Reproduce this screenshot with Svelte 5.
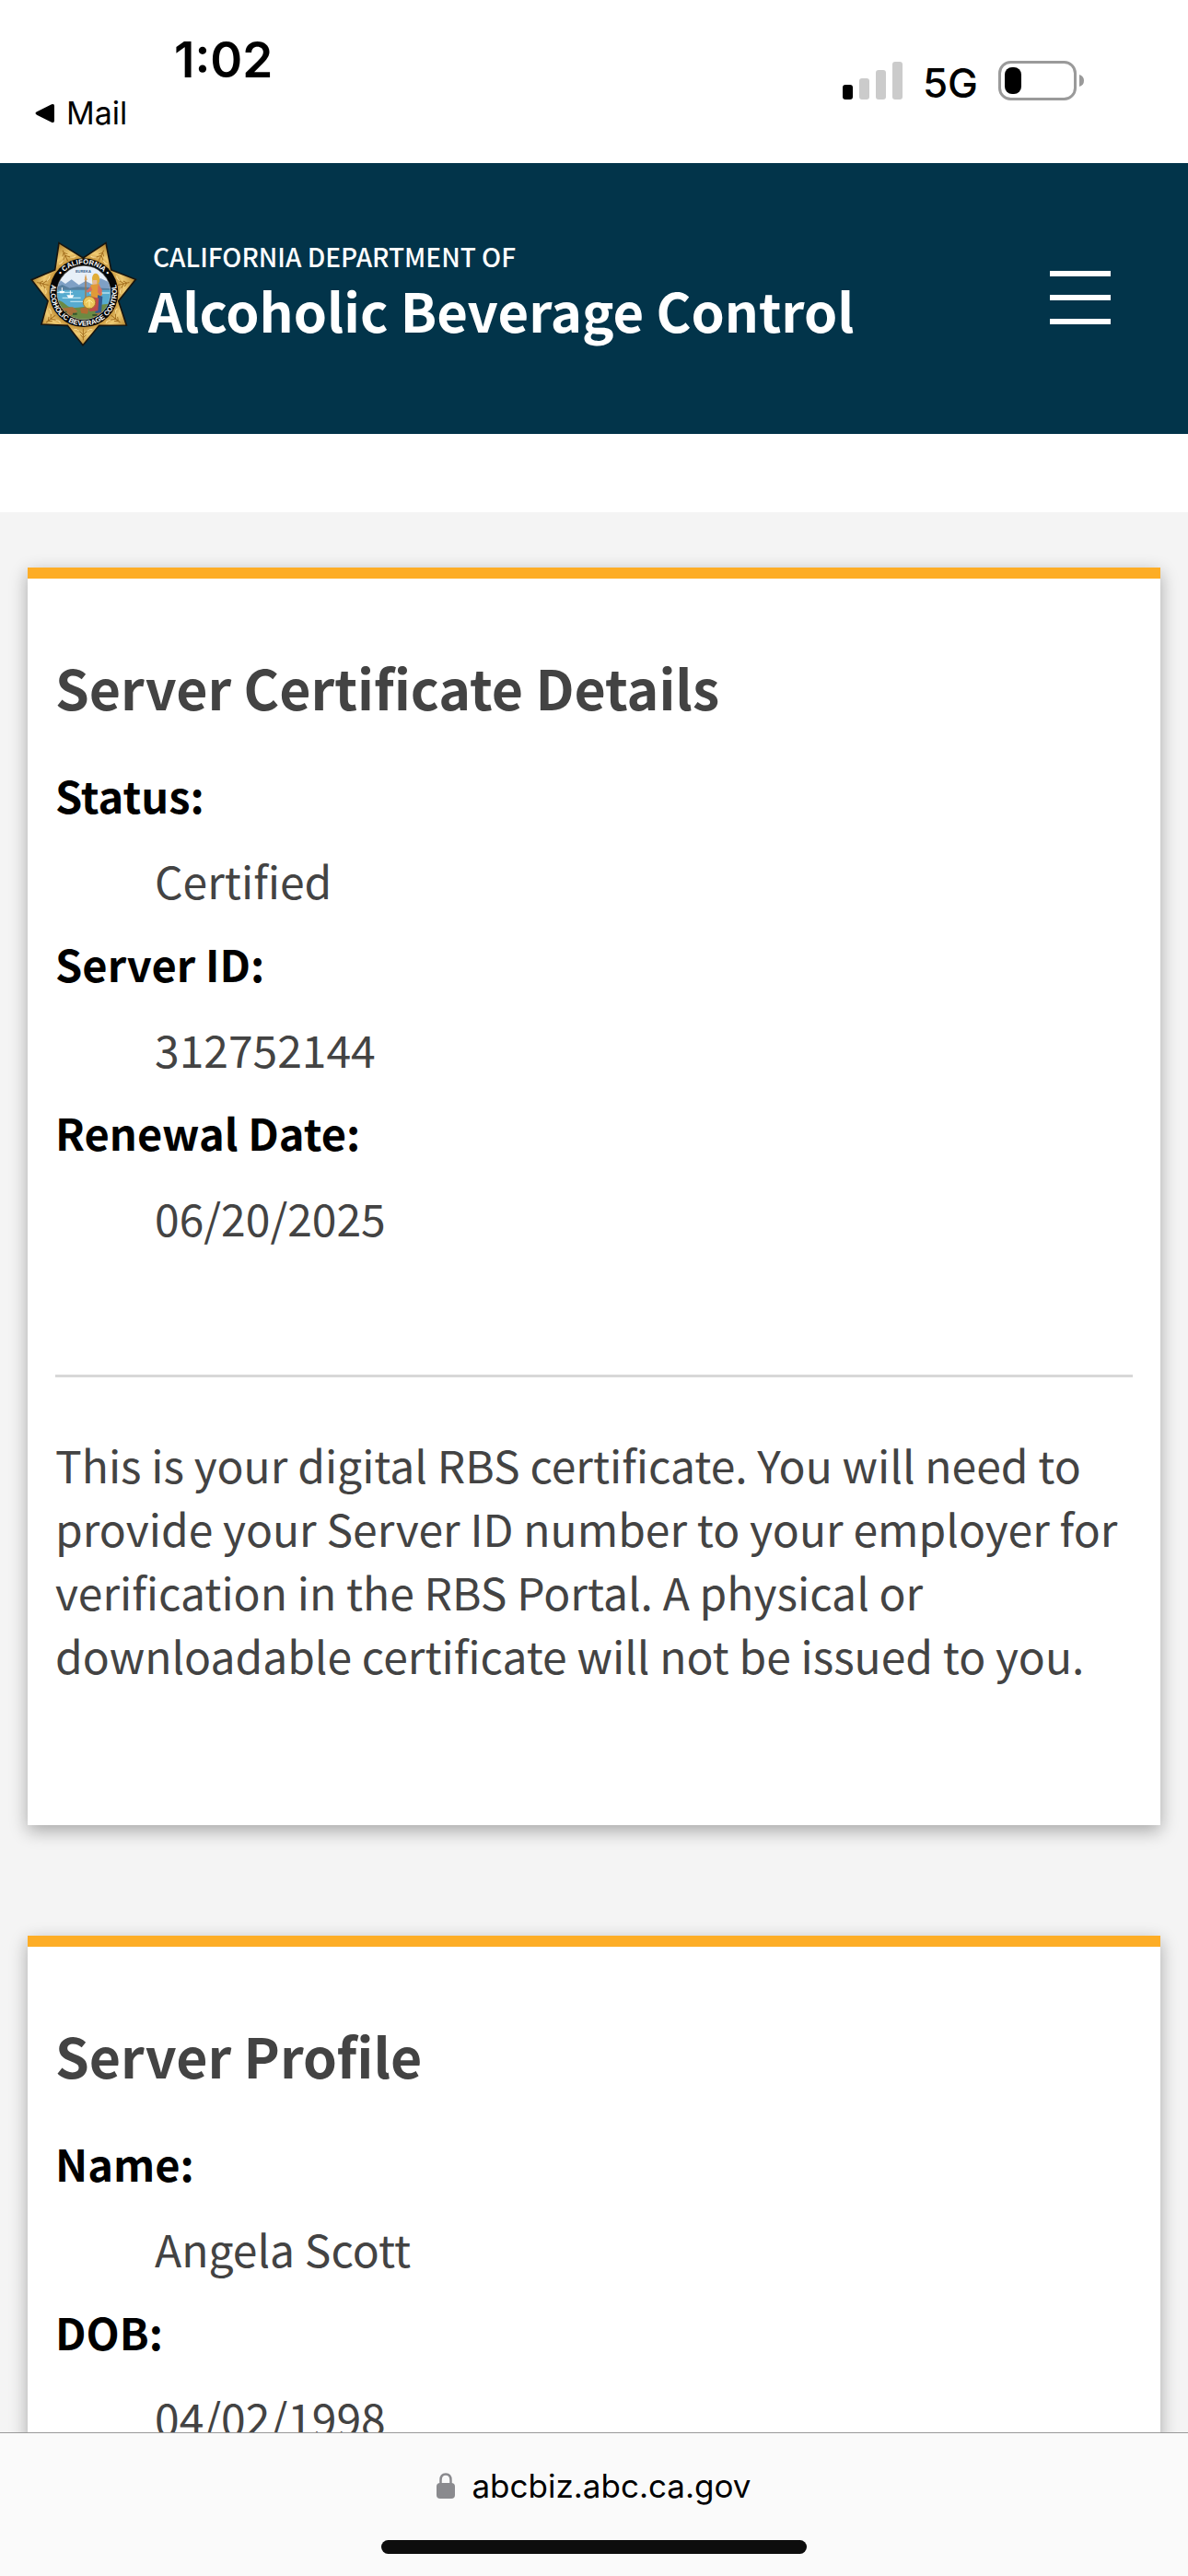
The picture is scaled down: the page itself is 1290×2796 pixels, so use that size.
<script lang="ts">
  // Server certificate page, shown in a mobile browser frame.

  interface Field {
    label: string;
    value: string;
  }

  interface Section {
    title: string;
    fields: Field[];
    note?: string;
  }

  const sections: Section[] = [
    {
      title: 'Server Certificate Details',
      fields: [
        { label: 'Status:', value: 'Certified' },
        { label: 'Server ID:', value: '312752144' },
        { label: 'Renewal Date:', value: '06/20/2025' },
      ],
      note: 'This is your digital RBS certificate. You will need to provide your Server ID number to your employer for verification in the RBS Portal. A physical or downloadable certificate will not be issued to you.',
    },
    {
      title: 'Server Profile',
      fields: [
        { label: 'Name:', value: 'Angela Scott' },
        { label: 'DOB:', value: '04/02/1998' },
      ],
    },
  ];

  // leaf veins repeated on each of the seven star tips
  const tips = [0, 1, 2, 3, 4, 5, 6].map((i) => (i * 360) / 7);
</script>

<div class="screen">
  <div class="status">
    <div class="left">
      <span class="time">1:02</span>
      <button class="back" type="button">
        <svg width="22" height="22" viewBox="0 0 22 22" aria-hidden="true">
          <path d="M2 9.3 18 1.3Q21 0 21 3V19Q21 22 18 20.7L2 12.7Q-1 11 2 9.3Z" />
        </svg>
        Mail
      </button>
    </div>
    <div class="right">
      <svg width="65" height="42" viewBox="0 0 65 42" role="img" aria-label="Signal">
        <rect x="0" y="25" width="11" height="16" rx="3" />
        <g fill="#cbcbcb">
          <rect x="18" y="18" width="11" height="23" rx="3" />
          <rect x="36" y="9" width="11" height="32" rx="3" />
          <rect x="54" y="0" width="11" height="41" rx="3" />
        </g>
      </svg>
      <span class="network">5G</span>
      <svg width="94" height="44" viewBox="0 0 94 44" role="img" aria-label="Battery">
        <rect x="1.5" y="1.5" width="82" height="40" rx="12" fill="none" stroke="#9a9a9a" stroke-width="3" />
        <rect x="7" y="7" width="18" height="29" rx="8" />
        <path d="M88 15Q93 16.500 93 21.500T88 28Z" fill="#9a9a9a" />
      </svg>
    </div>
  </div>

  <header>
    <a class="brand" href="/">
      <svg class="badge" width="116" height="114" viewBox="12 22 348 342" aria-hidden="true">
        <defs>
          <radialGradient id="gold" gradientUnits="userSpaceOnUse" cx="184" cy="190" r="172">
            <stop offset="0.6" stop-color="#b98328" />
            <stop offset="0.78" stop-color="#efcb74" />
            <stop offset="1" stop-color="#b88a34" />
          </radialGradient>
          <clipPath id="scene"><circle cx="186" cy="189" r="87" /></clipPath>
          <path id="arc-top" d="M93 189A93 93 0 0 1 279 189" />
          <path id="arc-bottom" d="M88 143A108 108 0 1 0 284 143" />
        </defs>
        <path
          d="M105 27 184 76 258 27 275 115 355 146 299 216 325 295 236 296 183 360 133 296 48 292 69 216 16 147 92 115Z"
          fill="url(#gold)"
          stroke="#18150f"
          stroke-width="5"
        />
        {#each tips as tip}
          <g transform="rotate({tip} 184 190)" fill="none" stroke="#a57020" stroke-width="3">
            <path d="M184 306V344M184 326 166 309M184 326 202 309M184 336 175 326M184 336 193 326" />
            <path d="M172 314Q162 306 154 309M196 314Q206 306 214 309" stroke="#fbe09a" />
          </g>
        {/each}
        <circle cx="186" cy="189" r="112" fill="#050607" />
        <g clip-path="url(#scene)">
          <rect x="98" y="100" width="178" height="180" fill="#e7eff8" />
          <path d="M96 160 112 150 126 160 146 146 170 164 192 151 214 162 240 142 276 158V190H96Z" fill="#7fa0c5" />
          <path d="M96 172 116 163 140 174 166 170 276 176V200H96Z" fill="#577f9f" />
          <path d="M96 180H276V240H96Z" fill="#57abcf" />
          <path d="M96 188H150M116 206H176M142 218H204M204 190H270" stroke="#b7e0ee" stroke-width="4" />
          <path d="M96 210Q118 218 130 230T180 236L276 224V280H96Z" fill="#6c8a43" />
          <path d="M110 240 150 236 166 250 142 264ZM226 256 272 240V276H214Z" fill="#a9713b" />
          <path d="M106 184H124L120 191H109ZM130 197H154L149 206H136Z" fill="#fff" />
          <path d="M142 182V198M115 172V184" stroke="#fff" stroke-width="3" />
          <path d="M192 138V214" stroke="#a77442" stroke-width="4" />
          <path d="M188 148 192 128 197 148Z" fill="#dca35d" />
          <path d="M213 141Q216 123 229 127 240 134 237 154L230 164H215Z" fill="#e0ad37" />
          <path d="M216 148H229V164H216Z" fill="#e8b994" />
          <path d="M208 164 236 160 246 194 236 212 210 204Z" fill="#e09a38" />
          <path d="M233 162 246 180 242 200 231 188ZM209 168 194 184 198 189 214 181Z" fill="#d76e62" />
          <path d="M232 196 247 202 243 254 223 256Z" fill="#345b91" />
          <path d="M210 202 235 207 232 248 204 250Z" fill="#bf4a4a" />
          <circle cx="204" cy="221" r="20" fill="#edc75b" stroke="#a77527" stroke-width="3" />
          <path d="M193 222Q203 207 215 222M204 211V234" fill="none" stroke="#fff0a1" stroke-width="3" />
          <path d="M174 242Q188 232 202 244L198 258 178 256Z" fill="#b16c32" />
          <path d="M116 252H130M150 258H164M214 262H230" stroke="#34562d" stroke-width="6" />
        </g>
        <circle cx="186" cy="189" r="88" fill="none" stroke="#d8d3c4" stroke-width="1" />
        <text class="motto" x="184" y="124" text-anchor="middle">EUREKA</text>
        <text class="ring"><textPath href="#arc-top" startOffset="50%" text-anchor="middle">• CALIFORNIA •</textPath></text>
        <text class="ring"><textPath href="#arc-bottom" startOffset="50%" text-anchor="middle">ALCOHOLIC BEVERAGE CONTROL</textPath></text>
      </svg>
      <span class="name">
        <span class="dept">CALIFORNIA DEPARTMENT OF</span>
        <span class="agency">Alcoholic Beverage Control</span>
      </span>
    </a>
    <button class="menu" type="button" aria-label="Menu">
      <span></span>
      <span></span>
      <span></span>
    </button>
  </header>

  <main>
    {#each sections as section}
      <section class="card">
        <h2>{section.title}</h2>
        <dl>
          {#each section.fields as field}
            <dt>{field.label}</dt>
            <dd>{field.value}</dd>
          {/each}
        </dl>
        {#if section.note}
          <hr />
          <p>{section.note}</p>
        {/if}
      </section>
    {/each}
  </main>

  <footer>
    <a class="address" href="/">
      <svg width="20" height="28" viewBox="0 0 20 28" aria-hidden="true">
        <path d="M4.500 13V8Q4.500 1.500 10 1.500T15.500 8V13" fill="none" stroke="#8a8a8e" stroke-width="2.500" />
        <rect x="0" y="11" width="20" height="17" rx="4" fill="#8a8a8e" />
      </svg>
      abcbiz.abc.ca.gov
    </a>
    <div class="home"></div>
  </footer>
</div>

<style>
  :global(body) {
    margin: 0;
    background: #fff;
  }
  .screen {
    display: flex;
    flex-direction: column;
    height: 100vh;
    overflow: hidden;
    color: #434343;
    font-family: 'Noto Sans CJK SC', 'Noto Sans', sans-serif;
    font-size: 48px;
  }
  button {
    margin: 0;
    padding: 0;
    border: 0;
    background: none;
    color: inherit;
    font: inherit;
  }
  a {
    color: inherit;
    text-decoration: none;
  }

  .status {
    flex: none;
    display: flex;
    justify-content: space-between;
    align-items: flex-start;
    box-sizing: border-box;
    height: 177px;
    padding: 35px 112px 0 38px;
    color: #000;
    font-family: Inter, sans-serif;
  }
  .left {
    display: flex;
    flex-direction: column;
    align-items: flex-start;
  }
  .time {
    padding-left: 151px;
    font-size: 53px;
    font-weight: 600;
    line-height: 60px;
  }
  .back {
    display: flex;
    align-items: center;
    gap: 12px;
    margin-top: 8px;
    font-size: 34px;
    line-height: 40px;
  }
  .right {
    display: flex;
    align-items: center;
    gap: 22px;
    padding-top: 27px;
  }
  .network {
    padding-top: 4px;
    font-size: 44px;
    font-weight: 500;
    line-height: 48px;
  }

  header {
    flex: none;
    display: flex;
    justify-content: space-between;
    align-items: flex-start;
    box-sizing: border-box;
    height: 294px;
    padding: 85px 84px 0 33px;
    background: #02344a;
    color: #fff;
  }
  .brand {
    display: flex;
    gap: 12px;
  }
  .ring {
    fill: #fff;
    font: bold 23px 'Liberation Sans', sans-serif;
  }
  .motto {
    fill: #35608f;
    font: bold 12px 'Liberation Sans', sans-serif;
  }
  .name {
    display: flex;
    flex-direction: column;
  }
  .dept {
    padding-left: 5px;
    font-size: 28px;
    font-weight: 500;
    line-height: 32px;
  }
  .agency {
    font-size: 58px;
    font-weight: 700;
    line-height: 84px;
  }
  .menu {
    display: flex;
    flex-direction: column;
    gap: 20px;
    margin-top: 32px;
  }
  .menu span {
    width: 66px;
    height: 6px;
    background: #fff;
  }

  main {
    flex: 1;
    min-height: 0;
    display: flex;
    flex-direction: column;
    gap: 120px;
    margin-top: 85px;
    padding: 60px 30px 0;
    overflow: hidden;
    background: #f4f4f4;
  }
  .card {
    flex: none;
    padding: 78px 30px 150px;
    border-top: 12px solid #fdad26;
    background: #fff;
    box-shadow: 0 6px 18px rgba(0, 0, 0, 0.32);
  }
  h2 {
    margin: 0 0 36px;
    font-size: 59px;
    font-weight: 700;
    line-height: 80px;
  }
  dl {
    margin: 0;
  }
  dt {
    margin-bottom: 12px;
    color: #000;
    font-size: 47px;
    font-weight: 700;
    line-height: 81px;
  }
  dd {
    margin: 0 0 9px 108px;
    line-height: 81px;
  }
  hr {
    height: 3px;
    margin: 130px 0 60px;
    border: 0;
    background: #d8d8d8;
  }
  p {
    margin: 0;
    line-height: 69px;
  }

  footer {
    flex: none;
    display: flex;
    flex-direction: column;
    align-items: center;
    box-sizing: border-box;
    height: 156px;
    padding-top: 33px;
    border-top: 1px solid #999;
    background: #fafafa;
  }
  .address {
    display: flex;
    align-items: center;
    gap: 18px;
    color: #000;
    font-family: Inter, sans-serif;
    font-size: 35px;
    line-height: 48px;
  }
  .home {
    width: 462px;
    height: 15px;
    margin-top: 35px;
    border-radius: 8px;
    background: #0d0d0d;
  }
</style>
